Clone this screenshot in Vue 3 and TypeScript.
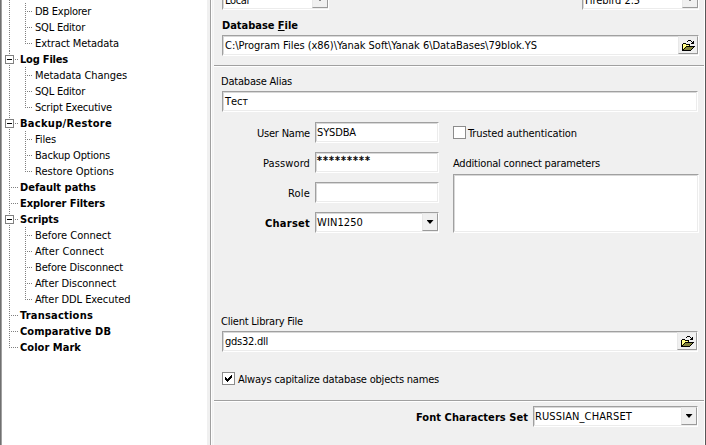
<script setup lang="ts">
import type { ObjectDirective } from 'vue'

interface Leaf { text: string; width: number }
interface Group extends Leaf { children: Leaf[] }

const groups: Group[] = [
  { text: '', width: 0, children: [
    { text: 'DB Explorer', width: 56 },
    { text: 'SQL Editor', width: 50 },
    { text: 'Extract Metadata', width: 84 },
  ] },
  { text: 'Log Files', width: 48, children: [
    { text: 'Metadata Changes', width: 92 },
    { text: 'SQL Editor', width: 50 },
    { text: 'Script Executive', width: 77 },
  ] },
  { text: 'Backup/Restore', width: 92, children: [
    { text: 'Files', width: 21 },
    { text: 'Backup Options', width: 75 },
    { text: 'Restore Options', width: 79 },
  ] },
  { text: 'Default paths', width: 76, children: [] },
  { text: 'Explorer Filters', width: 85, children: [] },
  { text: 'Scripts', width: 39, children: [
    { text: 'Before Connect', width: 76 },
    { text: 'After Connect', width: 69 },
    { text: 'Before Disconnect', width: 88 },
    { text: 'After Disconnect', width: 81 },
    { text: 'After DDL Executed', width: 95.5 },
  ] },
  { text: 'Transactions', width: 73, children: [] },
  { text: 'Comparative DB', width: 91, children: [] },
  { text: 'Color Mark', width: 61, children: [] },
]

// Spreads the tracking of a label so that it takes a fixed width.
const vFit: ObjectDirective<HTMLElement, number> = {
  mounted(el, binding) {
    const count = (el.textContent ?? '').trim().length
    const natural = el.getBoundingClientRect().width
    if (count > 0) el.style.letterSpacing = `${(binding.value - natural) / count}px`
  },
}

// Open-folder glyph, one character per pixel.
const folder = [
  '......KKK....',
  '.....K...K.K.',
  '..........KK.',
  '.KKK.....KKK.',
  'KYWYKKKK.....',
  'KWYWYWYK.....',
  'KYWYKKKKKKKKK',
  'KWYKOOOOOOOK.',
  'KYKOOOOOOOK..',
  'KKOOOOOOOK...',
  'KKKKKKKKK....',
]
const inks: Record<string, string> = { K: '#000', Y: '#ffff60', W: '#fffcae', O: '#84843c' }
const pixels = folder.flatMap((row, y) =>
  [...row].flatMap((c, x) => (c === '.' ? [] : [{ x, y, fill: inks[c] }])),
)
</script>

<template>
  <div class="window">
    <div class="edge"></div>
    <nav class="tree">
      <div v-for="(g, i) in groups" :key="i" class="group" :class="{ last: i === groups.length - 1 }">
        <div v-if="g.text" class="row root">
          <span v-if="g.children.length" class="toggle"></span>
          <span class="dash" :class="{ short: g.children.length }"></span>
          <span v-fit="g.width" class="t bold">{{ g.text }}</span>
        </div>
        <div v-if="g.children.length" class="children">
          <div v-for="(c, j) in g.children" :key="j" class="row leaf">
            <span class="dash"></span>
            <span v-fit="c.width" class="t">{{ c.text }}</span>
          </div>
        </div>
      </div>
    </nav>
    <div class="splitter"></div>
    <main class="panel">
      <section class="target">
        <div class="selects">
          <div class="field server"><span v-fit="24" class="t">Local</span><span class="btn drop"><i></i></span></div>
          <div class="field version"><span v-fit="55" class="t">Firebird 2.5</span><span class="btn drop"><i></i></span></div>
        </div>
        <div class="label file-label"><span v-fit="76" class="t bold">Database <u>F</u>ile</span></div>
        <div class="field file">
          <span v-fit="312" class="t">C:\Program Files (x86)\Yanak Soft\Yanak 6\DataBases\79blok.YS</span>
          <span class="btn browse"><svg width="13" height="11" shape-rendering="crispEdges"><rect v-for="(p, k) in pixels" :key="k" :x="p.x" :y="p.y" width="1" height="1" :fill="p.fill" /></svg></span>
        </div>
      </section>

      <section class="connection">
        <div class="label alias-label"><span v-fit="71" class="t">Database Alias</span></div>
        <div class="field wide"><span v-fit="23" class="t">Тест</span></div>
        <div class="columns">
          <div class="login">
            <label><span v-fit="53" class="t">User Name</span></label>
            <div class="field"><span v-fit="39" class="t">SYSDBA</span></div>
            <label><span v-fit="47" class="t">Password</span></label>
            <div class="field"><span v-fit="54" class="t stars">*********</span></div>
            <label><span v-fit="22" class="t">Role</span></label>
            <div class="field"></div>
            <label><span v-fit="45" class="t bold">Charset</span></label>
            <div class="field"><span v-fit="46" class="t">WIN1250</span><span class="btn drop"><i></i></span></div>
          </div>
          <div class="extra">
            <div class="check-row"><span class="check"></span><span v-fit="109" class="t">Trusted authentication</span></div>
            <div class="label params"><span v-fit="147" class="t">Additional connect parameters</span></div>
            <div class="field memo"></div>
          </div>
        </div>
        <div class="label client"><span v-fit="82" class="t">Client Library File</span></div>
        <div class="field wide">
          <span v-fit="43" class="t">gds32.dll</span>
          <span class="btn browse"><svg width="13" height="11" shape-rendering="crispEdges"><rect v-for="(p, k) in pixels" :key="k" :x="p.x" :y="p.y" width="1" height="1" :fill="p.fill" /></svg></span>
        </div>
        <div class="check-row capitalize">
          <span class="check"><svg width="7" height="7" viewBox="0 0 7 7" shape-rendering="crispEdges"><path d="M0 2h1v1h1v1h1v-1h1v-1h1v-1h1v-1h1v3h-1v1h-1v1h-1v1h-1v1h-1v-1h-1v-1h-1z" /></svg></span>
          <span v-fit="201" class="t">Always capitalize database objects names</span>
        </div>
      </section>

      <section class="fonts">
        <span v-fit="112" class="t bold">Font Characters Set</span>
        <div class="field charset"><span v-fit="97" class="t">RUSSIAN_CHARSET</span><span class="btn drop"><i></i></span></div>
      </section>
    </main>
    <div class="frame"></div>
  </div>
</template>

<style>
body { margin: 0; overflow: hidden; }
</style>

<style scoped>
.window {
  display: flex;
  width: 706px;
  height: 445px;
  overflow: hidden;
  box-sizing: border-box;
  background: #f0f0f0;
  color: #000;
  font: 11px/16px "DejaVu Sans Condensed", "DejaVu Sans", sans-serif;
  font-stretch: condensed;
}
.window * { box-sizing: border-box; }
.t { display: inline-block; white-space: pre; flex: none; }
.bold { font-weight: bold; }
.edge { width: 2px; flex: none; background: linear-gradient(90deg, #707070 1px, #a0a0a0 1px); }
.tree { width: 205px; flex: none; background: #fff; padding-top: 3px; }
.group {
  background: repeating-linear-gradient(180deg, #808080 0 1px, transparent 1px 2px) 7px 0 / 1px 100% no-repeat;
}
.group:first-child { margin-top: -3px; padding-top: 3px; }
.group.last { background-size: 1px 9px; }
.row { display: flex; align-items: center; height: 16px; }
.row .t { padding-top: 2px; }
.root { padding-left: 3px; }
.toggle {
  width: 9px;
  height: 9px;
  flex: none;
  margin-top: 1px;
  border: 1px solid #808080;
  background: linear-gradient(#000, #000) center / 5px 1px no-repeat, #fff;
}
.dash {
  flex: none;
  width: 7px;
  height: 1px;
  margin: 1px 2px 0 6px;
  background: repeating-linear-gradient(90deg, #808080 0 1px, transparent 1px 2px);
}
.dash.short { width: 3px; margin-left: 1px; }
.children {
  padding-left: 23px;
  background: repeating-linear-gradient(180deg, #808080 0 1px, transparent 1px 2px) 23px 0 / 1px calc(100% - 7px) no-repeat;
}
.leaf .dash { width: 8px; margin: 1px 2px 0 0; }
.splitter {
  width: 7px;
  flex: none;
  background: linear-gradient(90deg, #f0f0f0 3px, #a0a0a0 3px 4px, #fff 4px 5px, #f0f0f0 5px 6px, #f8f8f8 6px);
}
.panel { flex: none; width: 490px; display: flex; flex-direction: column; }
.frame { width: 2px; flex: none; background: linear-gradient(90deg, #fff 1px, #585858 1px); }

.field {
  display: flex;
  height: 21px;
  padding-left: 2px;
  background: #fff;
  border: 1px solid;
  border-color: #a0a0a0 #fff #fff #a0a0a0;
  box-shadow: inset -1px -1px #ececec, inset 1px 1px #d8d8d8;
  line-height: 19px;
}
.btn {
  display: flex;
  align-items: center;
  justify-content: center;
  flex: none;
  height: 18px;
  margin-left: auto;
  background: #f0f0f0;
  border: 1px solid;
  border-color: #e8e8e8 #9a9a9a #9a9a9a #e8e8e8;
}
.drop { width: 16px; }
.drop i { width: 7px; height: 4px; background: #000; clip-path: polygon(0 0, 100% 0, 50% 100%); }
.browse { width: 20px; }

.target { height: 67px; padding-left: 8px; border-bottom: 1px solid #fff; box-shadow: inset 0 -1px #a0a0a0; }
.selects { display: flex; justify-content: space-between; width: 477px; margin-top: -11px; }
.selects .t { line-height: 21px; }
.server { width: 107px; }
.version { width: 117px; }
.label { height: 16px; line-height: 18px; }
.file-label { margin: 7px 0 2px; }
.file { width: 477px; }

.connection { height: 335px; padding-left: 8px; border-bottom: 1px solid #fff; box-shadow: inset 0 -1px #a0a0a0; }
.alias-label { margin: 6px 0 2px -1px; }
.wide { width: 476px; }
.columns { display: flex; gap: 14px; margin-top: 10px; }
.login { display: grid; grid-template-columns: 88px 124px; column-gap: 5px; row-gap: 9px; }
.login label { text-align: right; line-height: 24px; height: 21px; }
.login .field { padding-left: 1px; }
.login .stars { line-height: 15px; -webkit-text-stroke: 0.3px #000; }
.extra { padding-top: 3px; }
.check-row { display: flex; align-items: center; gap: 3px; height: 15px; }
.check-row .t { padding-top: 2px; margin-left: -1px; }
.check {
  display: flex;
  align-items: center;
  justify-content: center;
  width: 13px;
  height: 13px;
  flex: none;
  background: #fff;
  border: 1px solid #8c8c8c;
}
.params { margin: 15px 0 3px; }
.memo { width: 246px; height: 59px; }
.client { margin: 80px 0 2px -1px; }
.capitalize { margin-top: 19px; }
.capitalize .t { margin-left: 0; }

.fonts { display: flex; justify-content: flex-end; padding: 4px 6px 0 0; gap: 5px; line-height: 23px; }
.charset { width: 165px; padding-left: 1px; }
</style>
